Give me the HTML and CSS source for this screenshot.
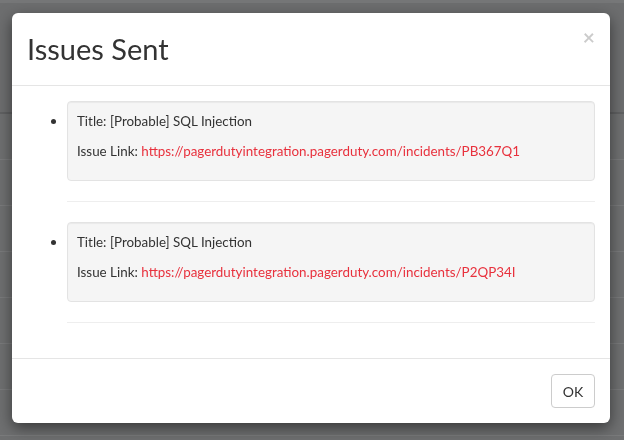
FILE: index.html
```html
<!DOCTYPE html>
<html>
<head>
<meta charset="utf-8">
<link rel="stylesheet" href="styles.css">
</head>
<body>
<div class="page">
  <div class="page-top"></div>
  <div class="page-head"></div>
  <div class="page-row"></div>
  <div class="page-row"></div>
  <div class="page-row"></div>
  <div class="page-row"></div>
  <div class="page-row"></div>
  <div class="page-row"><span class="green-btn"></span></div>
  <div class="page-row"></div>
</div>
<div class="backdrop">
  <div class="modal">
    <div class="modal-header">
      <h4 class="modal-title">Issues Sent</h4>
      <span class="close">&times;</span>
    </div>
    <div class="modal-body">
      <ul class="issues">
        <li>
          <div class="well">
            <p>Title: [Probable] SQL Injection</p>
            <p>Issue Link: <a href="#">https://pagerdutyintegration.pagerduty.com/incidents/PB367Q1</a></p>
          </div>
          <hr>
        </li>
        <li>
          <div class="well">
            <p>Title: [Probable] SQL Injection</p>
            <p>Issue Link: <a href="#">https://pagerdutyintegration.pagerduty.com/incidents/P2QP34I</a></p>
          </div>
          <hr>
        </li>
      </ul>
    </div>
    <div class="modal-footer">
      <button class="btn">OK</button>
    </div>
  </div>
</div>
</body>
</html>
```
FILE: styles.css
```css
html, body {
  margin: 0;
  padding: 0;
}
body {
  width: 624px;
  height: 440px;
  overflow: hidden;
  font-family: "Lato", "Open Sans", sans-serif;
  font-size: 14px;
  color: #333;
  background: #6f7071;
}
.page {
  display: flex;
  flex-direction: column;
}
.page-top {
  height: 3px;
  background: #767778;
}
.page-head {
  height: 109px;
  border-bottom: 2px solid #606162;
  background: #6d6e6f;
}
.page-row {
  height: 45px;
  border-bottom: 1px solid #7a7b7c;
  position: relative;
}
.green-btn {
  position: absolute;
  left: 20px;
  top: 30px;
  width: 44px;
  height: 6px;
  border-radius: 3px;
  background: #2f4a2c;
}
.backdrop {
  position: fixed;
  inset: 0;
  padding: 13px 14px 0 12px;
}
.modal {
  width: 598px;
  background: #fff;
  border-radius: 6px;
  box-shadow: 0 5px 15px rgba(0, 0, 0, 0.5);
  overflow: hidden;
}
.modal-header {
  display: flex;
  justify-content: space-between;
  align-items: flex-start;
  padding: 15px;
  border-bottom: 1px solid #e5e5e5;
}
.modal-title {
  margin: 0;
  font-size: 29px;
  font-weight: 400;
  line-height: 42px;
  color: #333;
}
.close {
  font-size: 21px;
  font-weight: 700;
  line-height: 1;
  color: #000;
  opacity: 0.2;
  margin-top: -2px;
  margin-right: 0;
}
.modal-body {
  padding: 15px;
}
.issues {
  margin: 0;
  padding-left: 40px;
  list-style: disc;
}
.issues li::marker {
  font-size: 14px;
}
.well {
  padding: 9px;
  background: #f5f5f5;
  border: 1px solid #e3e3e3;
  border-radius: 4px;
  box-shadow: inset 0 1px 1px rgba(0, 0, 0, 0.05);
}
.well p {
  margin: 0 0 10px;
  line-height: 20px;
  font-size: 13.4px;
}
.well a {
  color: #e8313d;
  text-decoration: none;
}
hr {
  margin: 20px 0;
  border: 0;
  border-top: 1px solid #eee;
}
.modal-footer {
  display: flex;
  justify-content: flex-end;
  padding: 15px;
  border-top: 1px solid #e5e5e5;
}
.btn {
  width: 44px;
  height: 34px;
  padding: 0;
  font-family: inherit;
  font-size: 14px;
  color: #333;
  background: #fff;
  border: 1px solid #ccc;
  border-radius: 4px;
}
```
